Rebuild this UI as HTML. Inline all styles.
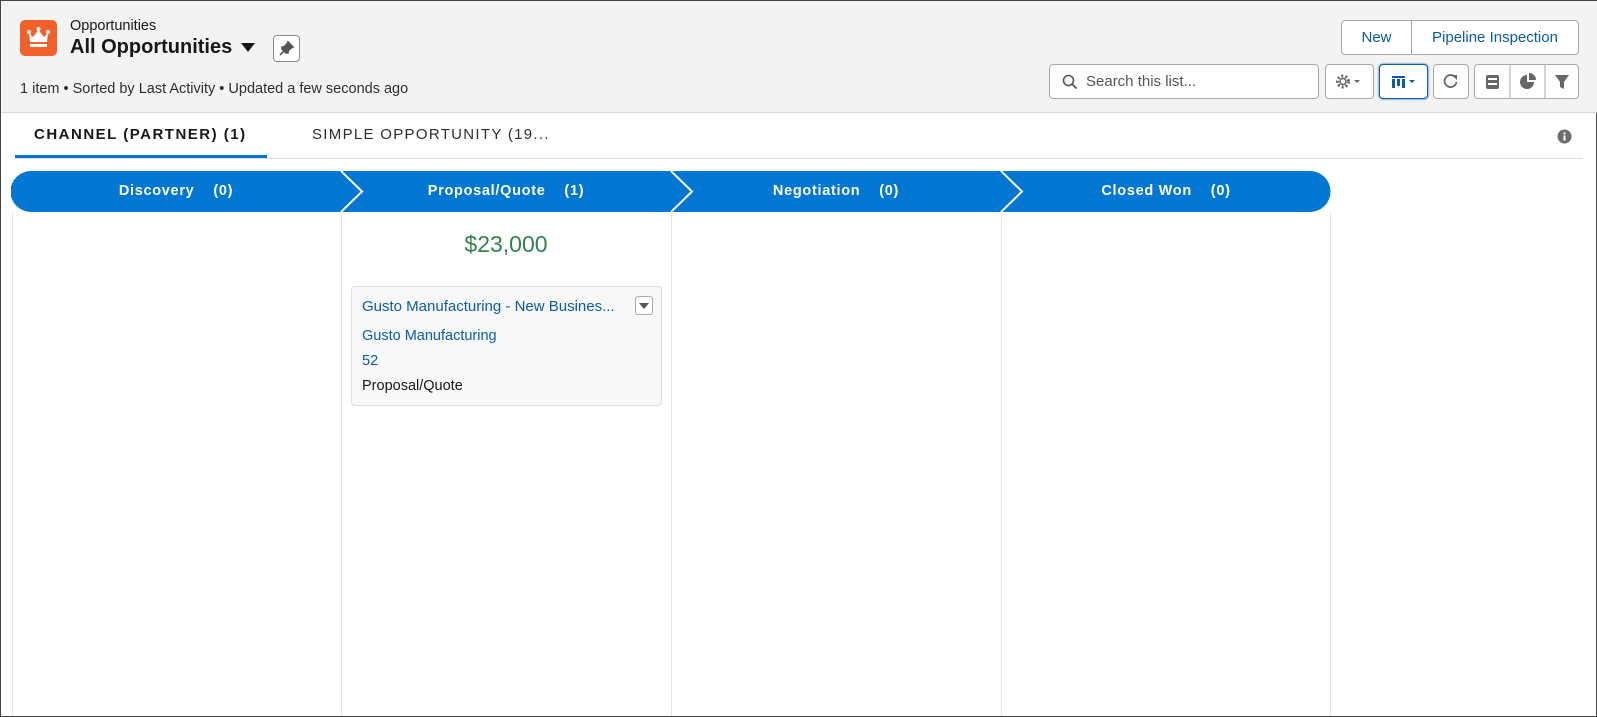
<!DOCTYPE html>
<html><head><meta charset="utf-8"><style>
*{box-sizing:border-box;margin:0;padding:0}
body{width:1597px;height:717px;overflow:hidden;background:#fff;font-family:"Liberation Sans",sans-serif;color:#181818;position:relative;border:1px solid #444}
.a{position:absolute}
.hdr{left:0;top:0;width:1597px;height:112px;background:#f3f3f3;border-bottom:1px solid #d8d8d8}
.btn{position:absolute;background:#fff;border:1px solid #a9a9a9;border-radius:4px}
.blue{color:#0b5cab}
.stage{position:absolute;top:170px;height:41px;color:#fff;font-weight:bold;font-size:14.5px;letter-spacing:.7px;line-height:41px;text-align:center}
.col{position:absolute;top:211px;bottom:0;width:1px;background:#e5e5e5}
</style></head><body>
<div class="a hdr"></div>
<div class="a" style="left:19px;top:19px;width:37px;height:36px;background:#f4602b;border-radius:5px">
<svg width="37" height="36" viewBox="0 0 37 36"><path d="M9 13 L13 17 L18.5 10 L24 17 L28 13 L27 22 H10 Z" fill="#fff"/><rect x="10" y="24" width="17" height="3" fill="#fff"/><circle cx="9" cy="12" r="2" fill="#fff"/><circle cx="18.5" cy="9" r="2" fill="#fff"/><circle cx="28" cy="12" r="2" fill="#fff"/></svg></div>
<div class="a" style="left:69px;top:17px;font-size:14.5px">Opportunities</div>
<div class="a" style="left:69px;top:35px;font-size:20px;font-weight:bold">All Opportunities</div>
<svg class="a" style="left:240px;top:42px" width="14" height="10"><path d="M0 0H14L7 9Z" fill="#181818"/></svg>
<div class="btn" style="left:272px;top:34px;width:27px;height:27px;border-color:#8a8a8a"><svg width="25" height="25" viewBox="0 0 25 25"><path d="M14 6 L19 11 L17 12 L14 15 L14 17 L12 17 L8 13 L8 11 L10 11 L13 8 Z M10 15 L6 19" stroke="#555" stroke-width="1.6" fill="#555"/></svg></div>
<div class="a" style="left:19px;top:80px;font-size:14.5px;color:#2e2e2e">1 item • Sorted by Last Activity • Updated a few seconds ago</div>

<div class="btn" style="left:1340px;top:19px;width:238px;height:35px;overflow:hidden">
<div class="a blue" style="left:0;top:0;width:70px;height:33px;line-height:33px;text-align:center;font-size:15px;border-right:1px solid #a9a9a9">New</div>
<div class="a blue" style="left:70px;top:0;width:166px;height:33px;line-height:33px;text-align:center;font-size:15px">Pipeline Inspection</div></div>
<div class="btn" style="left:1048px;top:63px;width:270px;height:35px">
<svg class="a" style="left:12px;top:9px" width="16" height="16"><circle cx="6.5" cy="6.5" r="5" stroke="#555" stroke-width="1.6" fill="none"/><path d="M10 10L14.5 14.5" stroke="#555" stroke-width="1.8"/></svg>
<div class="a" style="left:36px;top:8px;font-size:15px;color:#555">Search this list...</div></div>
<div class="btn" style="left:1324px;top:63px;width:49px;height:35px"><svg width="47" height="33"><circle cx="17" cy="16.5" r="5.5" stroke="#666" stroke-width="3" stroke-dasharray="2 2" fill="none"/><circle cx="17" cy="16.5" r="3" stroke="#666" stroke-width="1.5" fill="none"/><path d="M28 15H34L31 18Z" fill="#666"/></svg></div>
<div class="btn" style="left:1378px;top:63px;width:49px;height:35px;border-color:#0b5cab;box-shadow:0 0 2px #0b5cab"><svg width="47" height="33"><rect x="12" y="11" width="13" height="2" fill="#0b5cab"/><rect x="12" y="14" width="3" height="9" fill="#0b5cab"/><rect x="17" y="14" width="3" height="7" fill="#0b5cab"/><rect x="22" y="14" width="3" height="9" fill="#0b5cab"/><path d="M29 15H35L32 18Z" fill="#0b5cab"/></svg></div>
<div class="btn" style="left:1432px;top:63px;width:36px;height:35px"><svg width="34" height="33"><path d="M21 12 A6 6 0 1 0 22.5 17" stroke="#666" stroke-width="1.8" fill="none"/><path d="M18 10H23V15Z" fill="#666"/></svg></div>
<div class="btn" style="left:1473px;top:63px;width:105px;height:35px"><svg width="103" height="33"><rect x="11" y="10" width="13" height="14" rx="2" fill="#666"/><rect x="13" y="13" width="9" height="2" fill="#fff"/><rect x="13" y="18" width="9" height="2" fill="#fff"/><line x1="35" y1="0" x2="35" y2="33" stroke="#a9a9a9"/><path d="M52 10 A7 7 0 1 0 59 17 H52Z" fill="#666"/><path d="M54 8 A7 7 0 0 1 61 15 H54Z" fill="#666"/><line x1="70" y1="0" x2="70" y2="33" stroke="#a9a9a9"/><path d="M80 10H94L89 17V24L85 22V17Z" fill="#666"/></svg></div>

<div class="a" style="left:33px;top:125px;font-size:15px;font-weight:bold;letter-spacing:1.5px">CHANNEL (PARTNER) (1)</div>
<div class="a" style="left:311px;top:125px;font-size:15px;letter-spacing:1.3px;color:#2e2e2e">SIMPLE OPPORTUNITY (19...</div>
<div class="a" style="left:14px;top:157px;width:1568px;height:1px;background:#dcdcdc"></div>
<div class="a" style="left:14px;top:154px;width:252px;height:3px;background:#0176d3"></div>
<svg class="a" style="left:1556px;top:128px" width="15" height="15"><circle cx="7.5" cy="7.5" r="7" fill="#706e6b"/><rect x="6.5" y="6.5" width="2" height="5" fill="#fff"/><circle cx="7.5" cy="4.5" r="1.1" fill="#fff"/></svg>

<svg class="a" style="left:10px;top:170px" width="1320" height="41"><path d="M20 0H1299A20.5 20.5 0 0 1 1299 41H20A20.5 20.5 0 0 1 20 0Z" fill="#0176d3"/>
<path d="M330 0L351 20.5L330 41M660 0L681 20.5L660 41M990 0L1011 20.5L990 41" stroke="#fff" stroke-width="2" fill="none"/></svg>
<div class="stage" style="left:10px;width:330px">Discovery&nbsp;&nbsp;&nbsp;&nbsp;(0)</div>
<div class="stage" style="left:340px;width:330px">Proposal/Quote&nbsp;&nbsp;&nbsp;&nbsp;(1)</div>
<div class="stage" style="left:670px;width:330px">Negotiation&nbsp;&nbsp;&nbsp;&nbsp;(0)</div>
<div class="stage" style="left:1000px;width:330px">Closed Won&nbsp;&nbsp;&nbsp;&nbsp;(0)</div>
<div class="col" style="left:11px"></div><div class="col" style="left:340px"></div><div class="col" style="left:670px"></div><div class="col" style="left:1000px"></div><div class="col" style="left:1329px"></div>

<div class="a" style="left:340px;width:330px;top:230px;text-align:center;font-size:23px;color:#2e844a">$23,000</div>
<div class="a" style="left:350px;top:285px;width:311px;height:120px;background:#f8f8f8;border:1px solid #dedede;border-radius:4px">
<div class="a blue" style="left:10px;top:11px;font-size:15px;white-space:nowrap">Gusto Manufacturing - New Busines...</div>
<div class="a" style="left:283px;top:9px;width:18px;height:19px;background:#fff;border:1px solid #aaa;border-radius:3px"><svg width="16" height="17"><path d="M3 6H13L8 12Z" fill="#555"/></svg></div>
<div class="a blue" style="left:10px;top:41px;font-size:14.5px">Gusto Manufacturing</div>
<div class="a blue" style="left:10px;top:66px;font-size:14.5px">52</div>
<div class="a" style="left:10px;top:91px;font-size:14.5px">Proposal/Quote</div>
</div>
</body></html>
